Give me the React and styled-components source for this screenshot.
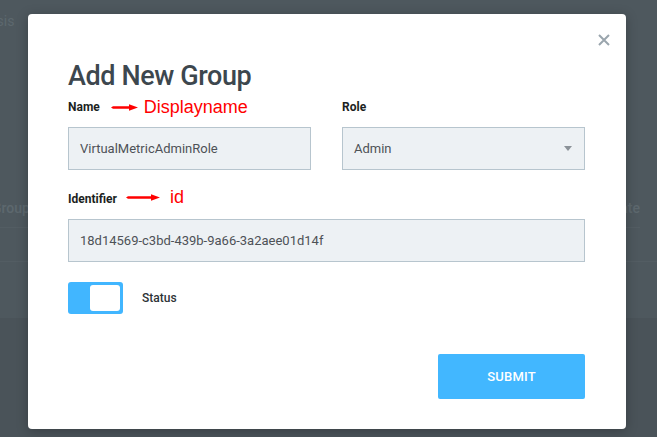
import React from 'react'
import styled, { createGlobalStyle } from 'styled-components'

const GlobalStyle = createGlobalStyle`
  html, body {
    margin: 0;
    padding: 0;
    background: #4e585e;
    font-family: Roboto, "Liberation Sans", Arial, sans-serif;
  }
  * { box-sizing: border-box; }
`

const Page = styled.div`
  position: relative;
  width: 657px;
  height: 437px;
  overflow: hidden;
  background: #4e585e;
`

const Backdrop = styled.div`
  display: flex;
  flex-direction: column;
  color: #5d686e;
  font-size: 14px;
`

const TopNav = styled.div`
  display: flex;
  align-items: center;
  gap: 40px;
  height: 40px;
  margin-left: -38px;
  padding-top: 2px;
`

const TableHead = styled.div`
  display: flex;
  justify-content: space-between;
  margin-top: 160px;
  margin-left: -8px;
  margin-right: 17px;
  height: 28px;
  border-bottom: 1px solid #535d63;
  font-weight: 500;
`

const TableRow = styled.div`
  height: 34px;
  border-bottom: 1px solid #535d63;
`

const Band = styled.div`
  margin-top: 56px;
  height: 120px;
  background: #4a5359;
`

const Modal = styled.div`
  position: absolute;
  left: 28px;
  top: 14px;
  width: 598px;
  height: 415px;
  background: #fff;
  border-radius: 4px;
  box-shadow: 0 2px 12px rgba(0, 0, 0, 0.25);
  padding: 46px 41px 30px 40px;
`

const Close = styled.button`
  position: absolute;
  top: 18px;
  right: 14px;
  width: 16px;
  height: 16px;
  padding: 0;
  border: none;
  background: none;
  cursor: pointer;
`

const Title = styled.h2`
  margin: 0;
  font-size: 27px;
  line-height: 32px;
  font-weight: 500;
  color: #3d474e;
  letter-spacing: -0.4px;
`

const Row = styled.div`
  display: grid;
  grid-template-columns: 1fr 1fr;
  column-gap: 31px;
  margin-top: ${(p) => p.$top || 0}px;
`

const Field = styled.div`
  display: flex;
  flex-direction: column;
  gap: 11px;
  grid-column: ${(p) => (p.$wide ? '1 / 3' : 'auto')};
`

const LabelLine = styled.div`
  display: flex;
  align-items: center;
  height: 18px;
`

const Label = styled.label`
  font-size: 12px;
  font-weight: 700;
  color: #1b1f22;
`

const Note = styled.span`
  display: flex;
  align-items: center;
  color: #ff0000;
  font-size: 18px;
  font-family: "Liberation Sans", Arial, sans-serif;
  margin-left: ${(p) => p.$gap}px;
  gap: ${(p) => p.$space}px;
  position: relative;
  top: ${(p) => p.$lift || 0}px;
`

const Box = styled.div`
  display: flex;
  align-items: center;
  justify-content: space-between;
  height: 43px;
  padding: 0 12px 0 11px;
  background: #edf1f4;
  border: 1px solid #b7c5ce;
  font-size: 13px;
  color: #4d5257;
`

const Caret = styled.span`
  width: 0;
  height: 0;
  border-left: 4px solid transparent;
  border-right: 4px solid transparent;
  border-top: 5px solid #8b9298;
`

const ToggleRow = styled.div`
  display: flex;
  align-items: center;
  gap: 19px;
  margin-top: 20px;
`

const Toggle = styled.div`
  display: flex;
  justify-content: flex-end;
  align-items: center;
  width: 55px;
  height: 32px;
  padding: 0 3px;
  background: #41b6ff;
  border-radius: 3px;
`

const Knob = styled.div`
  width: 30px;
  height: 26px;
  background: #fff;
  border-radius: 3px;
`

const StatusText = styled.span`
  font-size: 12px;
  font-weight: 500;
  color: #2d3236;
`

const Footer = styled.div`
  display: flex;
  justify-content: flex-end;
  margin-top: 40px;
`

const Submit = styled.button`
  width: 147px;
  height: 45px;
  border: none;
  border-radius: 2px;
  background: #42b7ff;
  color: #fff;
  font-family: inherit;
  font-size: 13px;
  font-weight: 500;
  letter-spacing: 0.2px;
  cursor: pointer;
`

const Arrow = ({ width }) => (
  <svg width={width} height="7" viewBox={`0 0 ${width} 7`}>
    <path
      d={`M0 3.5 L2 2.3 L${width - 9} 2.3 L${width - 9} 0.3 L${width} 3.5 L${width - 9} 6.7 L${width - 9} 4.7 L2 4.7 Z`}
      fill="#ff0000"
    />
  </svg>
)

const App = () => {
  return (
    <Page>
      <GlobalStyle />
      <Backdrop>
        <TopNav>
          <span>Analysis</span>
          <span>▭</span>
        </TopNav>
        <TableHead>
          <span>Group</span>
          <span>Date</span>
        </TableHead>
        <TableRow />
        <Band />
      </Backdrop>

      <Modal>
        <Close aria-label="close">
          <svg width="16" height="16" viewBox="0 0 16 16">
            <path d="M3 3 L13 13 M13 3 L3 13" stroke="#9aa5ad" strokeWidth="2" />
          </svg>
        </Close>
        <Title>Add New Group</Title>

        <Row $top={6}>
          <Field>
            <LabelLine>
              <Label>Name</Label>
              <Note $gap={11} $space={6}>
                <Arrow width={27} />
                Displayname
              </Note>
            </LabelLine>
            <Box>VirtualMetricAdminRole</Box>
          </Field>
          <Field>
            <LabelLine>
              <Label>Role</Label>
            </LabelLine>
            <Box>
              Admin
              <Caret />
            </Box>
          </Field>
        </Row>

        <Row $top={20}>
          <Field $wide>
            <LabelLine>
              <Label>Identifier</Label>
              <Note $gap={9} $space={10} $lift={-2}>
                <Arrow width={34} />
                id
              </Note>
            </LabelLine>
            <Box>18d14569-c3bd-439b-9a66-3a2aee01d14f</Box>
          </Field>
        </Row>

        <ToggleRow>
          <Toggle>
            <Knob />
          </Toggle>
          <StatusText>Status</StatusText>
        </ToggleRow>

        <Footer>
          <Submit>SUBMIT</Submit>
        </Footer>
      </Modal>
    </Page>
  )
}

export default App
